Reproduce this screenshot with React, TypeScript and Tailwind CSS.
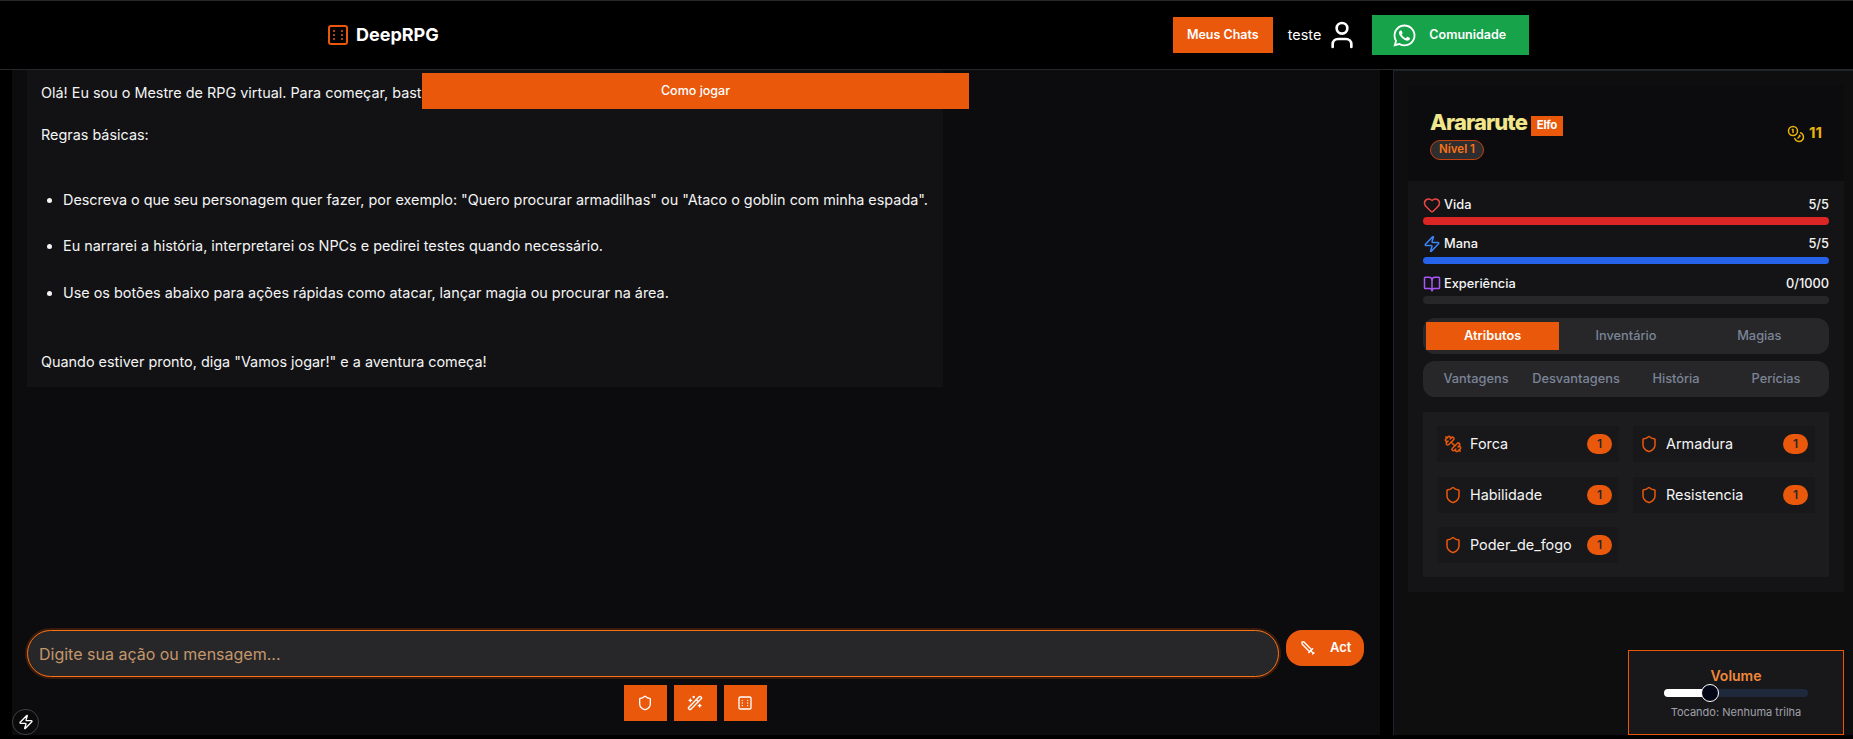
import { BookOpen, Coins, Dice6, Dumbbell, Heart, Shield, Sword, User, WandSparkles, Zap } from "lucide-react";
import { FaWhatsapp } from "react-icons/fa";

const atributos = ["Forca", "Armadura", "Habilidade", "Resistencia", "Poder_de_fogo"];

function StatRow({ icon, label, value, className }: { icon: React.ReactNode; label: string; value: string; className: string }) {
  return (
    <div className={`flex h-5 items-center justify-between text-[12.8px] font-medium text-[#f4f4f5] ${className}`}>
      <span className="flex items-center gap-[3px]">
        {icon}
        {label}
      </span>
      <span>{value}</span>
    </div>
  );
}

export default function App() {
  return (
    <div className="relative flex h-[739px] flex-col overflow-hidden bg-black font-['Inter',sans-serif] text-white">
      {/* header */}
      <header className="flex h-[70px] shrink-0 items-center border-t border-b border-[#27272a] bg-black">
        <div className="ml-[326px] flex items-center gap-[6px]">
          <Dice6 size={24} strokeWidth={2} className="text-[#ea580c]" />
          <span className="text-lg font-bold">DeepRPG</span>
        </div>
        <div className="ml-[734px] flex items-center">
          <button className="h-9 w-[100px] bg-[#ea580c] text-[12.5px] font-semibold">Meus Chats</button>
          <span className="ml-[15px] text-[14.4px]">teste</span>
          <User size={32} className="ml-[5px]" />
          <button className="ml-[14px] flex h-10 w-[157px] items-center gap-3 bg-[#16a34a] pl-[20px] text-[12.5px] font-semibold">
            <FaWhatsapp size={25} />
            Comunidade
          </button>
        </div>
      </header>

      <div className="flex min-h-0 flex-1 pb-1">
        {/* chat */}
        <main className="ml-3 flex w-[1368px] flex-col bg-[#0c0c0e] px-[15px]">
          <div className="w-[916px] bg-[#121214] pt-[11px] pb-[13px] pl-[14px] text-[14.4px] leading-6 text-[#f4f4f5]">
            <p>Olá! Eu sou o Mestre de RPG virtual. Para começar, basta me dizer o que deseja fazer.</p>
            <p className="mt-[18px]">Regras básicas:</p>
            <ul className="mt-[41px] list-disc pl-[22px]">
              <li>Descreva o que seu personagem quer fazer, por exemplo: "Quero procurar armadilhas" ou "Ataco o goblin com minha espada".</li>
              <li className="mt-[22px]">Eu narrarei a história, interpretarei os NPCs e pedirei testes quando necessário.</li>
              <li className="mt-[23px]">Use os botões abaixo para ações rápidas como atacar, lançar magia ou procurar na área.</li>
            </ul>
            <p className="mt-[45px]">Quando estiver pronto, diga "Vamos jogar!" e a aventura começa!</p>
          </div>

          <div className="mt-auto flex items-start gap-[7px]">
            <input
              readOnly
              placeholder="Digite sua ação ou mensagem..."
              className="h-[47px] w-[1252px] rounded-full border border-[#f97316] bg-[#27272a] px-[11px] text-base shadow-[0_0_0_2px_rgba(234,88,12,0.2)] outline-none placeholder:text-[#c4976a]"
            />
            <button className="flex h-9 w-[78px] items-center gap-[14px] rounded-2xl bg-[#ea580c] pl-[14px] text-[13px] font-semibold">
              <Sword size={16} className="-scale-x-100" />
              Act
            </button>
          </div>
          <div className="mt-2 mb-[14px] flex justify-center gap-[7px] pr-[2px]">
            <button className="flex h-9 w-[43px] items-center justify-center bg-[#ea580c]"><Shield size={16} /></button>
            <button className="flex h-9 w-[43px] items-center justify-center bg-[#ea580c]"><WandSparkles size={16} /></button>
            <button className="flex h-9 w-[43px] items-center justify-center bg-[#ea580c]"><Dice6 size={16} /></button>
          </div>
        </main>

        {/* ficha */}
        <aside className="ml-[13px] min-w-0 flex-1 border-t border-l border-[#1e2330] bg-[#0e0e0f] pt-[14px] pl-[14px]">
          <div className="w-[436px]">
            <div className="flex h-[96px] items-center justify-between bg-[#0c0c0e] pr-[22px] pl-[22px]">
              <div>
                <div className="flex items-center gap-[4px]">
                  <span className="text-[22px] leading-8 font-extrabold tracking-[-0.9px] text-[#f0e68c]">Arararute</span>
                  <span className="mt-[8px] flex h-5 w-8 items-center justify-center bg-[#ea580c] text-[11.5px] font-bold tracking-[-0.3px]">Elfo</span>
                </div>
                <span className="mt-[2px] flex h-5 w-[54px] items-center justify-center rounded-full border border-[#c2410c] bg-[#2e2e30] text-[11.5px] font-semibold text-[#f97316]">Nível 1</span>
              </div>
              <span className="mt-[1px] flex items-center gap-[4px] text-[15px] font-bold text-[#eab308]">
                <Coins size={18} />
                11
              </span>
            </div>

            <div className="bg-[#141416] px-[15px] pt-[14px] pb-[15px]">
              <StatRow className="" label="Vida" value="5/5" icon={<Heart size={18} className="text-[#ef4444]" />} />
              <div className="mt-[2px] h-2 rounded-full bg-[#dc2626]" />
              <StatRow className="mt-[9px]" label="Mana" value="5/5" icon={<Zap size={18} className="text-[#3b82f6]" />} />
              <div className="mt-[3px] h-[7px] rounded-full bg-[#2563eb]" />
              <StatRow className="mt-[10px]" label="Experiência" value="0/1000" icon={<BookOpen size={18} className="text-[#a855f7]" />} />
              <div className="mt-[2px] h-2 rounded-full bg-[#27272a]" />

              <div className="mt-[14px] grid h-9 grid-cols-3 items-center rounded-xl bg-[#27272a] px-[3px] text-center text-[12.8px] font-medium text-[#7b8496]">
                <span className="flex h-7 items-center justify-center bg-[#ea580c] font-semibold text-white">Atributos</span>
                <span>Inventário</span>
                <span>Magias</span>
              </div>
              <div className="mt-[7px] grid h-9 grid-cols-4 items-center rounded-xl bg-[#27272a] px-[3px] text-center text-[12.8px] font-medium text-[#7b8496]">
                <span>Vantagens</span>
                <span>Desvantagens</span>
                <span>História</span>
                <span>Perícias</span>
              </div>

              <div className="mt-[15px] grid grid-cols-2 gap-x-[14px] gap-y-[14.5px] bg-[#1c1c1e] p-[14px]">
                {atributos.map((nome) => (
                  <div key={nome} className="flex h-9 items-center bg-[#18181a] pr-[7px] pl-[7px]">
                    {nome === "Forca" ? (
                      <Dumbbell size={18} className="-scale-x-100 text-[#ea580c]" />
                    ) : (
                      <Shield size={18} className="text-[#ea580c]" />
                    )}
                    <span className="ml-[8px] text-[14.4px] text-[#f4f4f5]">{nome}</span>
                    <span className="ml-auto flex h-5 w-[25px] items-center justify-center rounded-full bg-[#ea580c] text-xs font-semibold text-[#27272a]">1</span>
                  </div>
                ))}
              </div>
            </div>
          </div>
        </aside>
      </div>

      {/* sobreposições */}
      <button className="absolute top-[73px] left-[422px] h-9 w-[547px] bg-[#ea580c] text-[12.5px] font-medium">Como jogar</button>

      <div className="absolute top-[709px] left-[12px] flex h-[26px] w-[27px] items-center justify-center rounded-full border border-[#3f3f46] bg-[#0a0a0a]">
        <Zap size={16} />
      </div>

      <div className="absolute top-[650px] left-[1628px] flex h-[85px] w-[216px] flex-col items-center border border-[#ea580c] bg-[#18181b] pt-[15px]">
        <span className="text-sm leading-5 font-semibold text-[#f0883a]">Volume</span>
        <div className="relative mt-[3px] h-2 w-[144px] rounded-full bg-[#1e293b]">
          <div className="h-2 w-[46px] rounded-full bg-white" />
          <div className="absolute top-[-5px] left-[37px] h-[18px] w-[18px] rounded-full border border-white bg-[#020617]" />
        </div>
        <span className="mt-[7px] text-[11px] text-[#a1a1aa]">Tocando: Nenhuma trilha</span>
      </div>
    </div>
  );
}
